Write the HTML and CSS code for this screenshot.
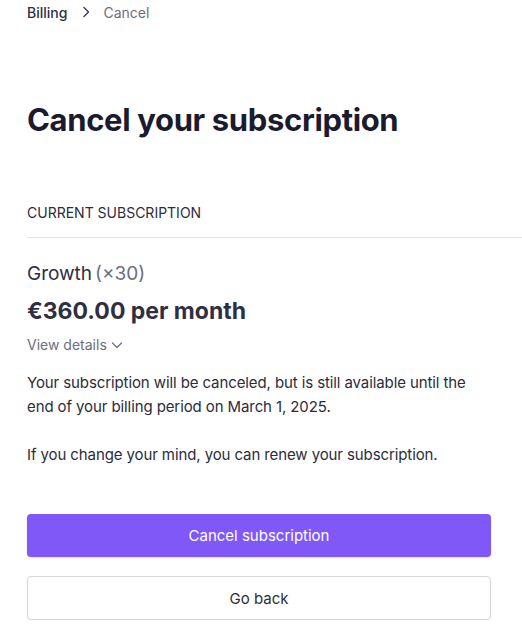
FILE: index.html
```html
<!DOCTYPE html>
<html>
<head>
<meta charset="utf-8">
<link rel="stylesheet" href="styles.css">
</head>
<body>
<div class="page">
  <nav class="crumbs">
    <span class="crumb-link">Billing</span>
    <svg class="crumb-sep" width="16" height="16" viewBox="0 0 16 16"><path d="M6 3.5 L10.5 8 L6 12.5" fill="none" stroke="#3a3b4c" stroke-width="1.4" stroke-linecap="round" stroke-linejoin="round"/></svg>
    <span class="crumb-current">Cancel</span>
  </nav>
  <h1 class="title">Cancel your subscription</h1>
  <div class="section-head">CURRENT SUBSCRIPTION</div>
  <div class="plan">
    <div class="plan-name">Growth<span class="plan-qty">(×30)</span></div>
    <div class="plan-price">€360.00 per month</div>
    <div class="details">View details
      <svg class="details-icon" width="14" height="14" viewBox="0 0 14 14"><path d="M2.5 5 L7 9.5 L11.5 5" fill="none" stroke="#6b6e80" stroke-width="1.2" stroke-linecap="round" stroke-linejoin="round"/></svg>
    </div>
    <p class="text">Your subscription will be canceled, but is still available until the end of your billing period on March 1, 2025.</p>
    <p class="text">If you change your mind, you can renew your subscription.</p>
    <div class="actions">
      <button class="btn btn-primary">Cancel subscription</button>
      <button class="btn btn-secondary">Go back</button>
    </div>
  </div>
</div>
</body>
</html>
```
FILE: styles.css
```css
html, body {
  margin: 0;
  padding: 0;
  background: #ffffff;
}
body {
  font-family: Inter, "Noto Sans", sans-serif;
  color: #2b2c3d;
}
.page {
  padding: 0 0 0 27px;
}
.crumbs {
  display: flex;
  align-items: center;
  height: 24px;
  font-size: 14px;
}
.crumb-link {
  font-weight: 500;
  color: #2e2f40;
}
.crumb-sep {
  margin: 0 9px 0 11px;
}
.crumb-current {
  color: #6b6e80;
}
.title {
  margin: 76px 0 0 0;
  font-size: 31px;
  line-height: 40px;
  font-weight: 700;
  color: #1b1b2e;
  letter-spacing: -0.35px;
}
.section-head {
  margin-top: 63px;
  font-size: 14px;
  line-height: 20px;
  padding-bottom: 14px;
  border-bottom: 1px solid #e3e3ea;
  color: #2b2c3d;
}
.plan {
  padding-right: 31px;
}
.plan-name {
  margin-top: 23px;
  font-size: 19px;
  line-height: 26px;
  color: #2e2f42;
}
.plan-qty {
  margin-left: 3px;
  color: #6b6e80;
}
.plan-price {
  margin-top: 10px;
  font-size: 23px;
  line-height: 28px;
  font-weight: 700;
  color: #2e2f42;
}
.details {
  display: flex;
  align-items: center;
  margin-top: 10px;
  font-size: 14px;
  line-height: 20px;
  color: #6b6e80;
}
.details-icon {
  margin-left: 3px;
}
.text {
  margin: 16px 0 0 0;
  font-size: 15px;
  line-height: 24px;
  letter-spacing: -0.1px;
  color: #2b2c3d;
}
.text + .text {
  margin-top: 24px;
}
.actions {
  display: flex;
  flex-direction: column;
  gap: 19px;
  margin-top: 47px;
}
.btn {
  font-family: Inter, "Noto Sans", sans-serif;
  font-size: 15px;
  height: 44px;
  border-radius: 4px;
  width: 100%;
}
.btn-primary {
  height: 43px;
  background: #7f58f7;
  color: #ffffff;
  border: none;
  box-shadow: 0 1px 2px rgba(0,0,0,0.12);
}
.btn-secondary {
  background: #ffffff;
  color: #2b2c3d;
  border: 1px solid #d6d6dc;
  box-shadow: 0 1px 2px rgba(0,0,0,0.06);
}
```
